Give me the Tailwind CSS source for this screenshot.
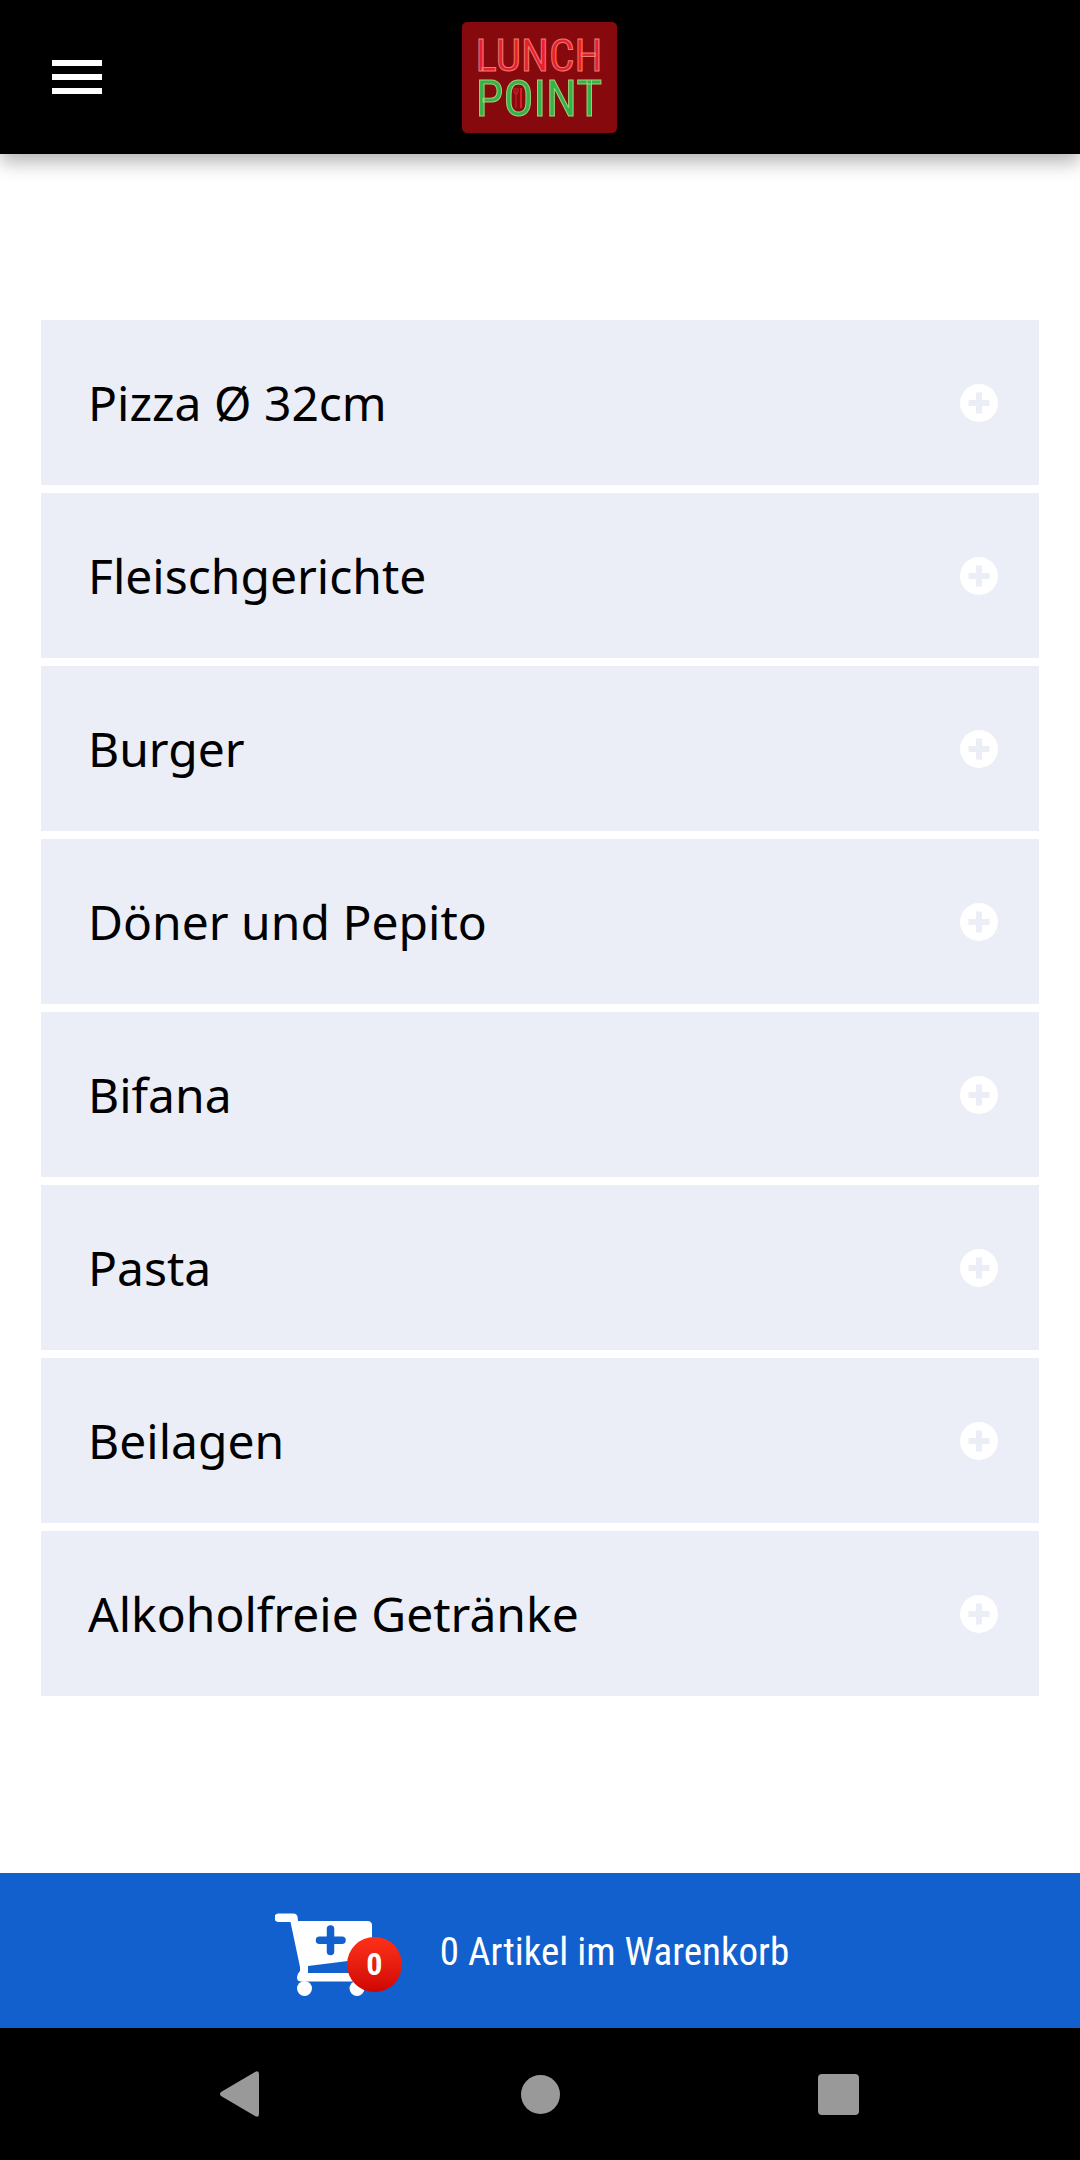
<!DOCTYPE html>
<html lang="de">

<head>
    <meta charset="UTF-8">
    <meta name="viewport" content="width=device-width, initial-scale=1.0">
    <title>Lunch Point</title>
    <script src="https://cdn.jsdelivr.net/npm/@tailwindcss/browser@4"></script>
</head>

<body class="bg-white min-h-screen flex flex-col font-['Noto_Sans',sans-serif] text-black">

    <header class="relative z-10 grid grid-cols-3 items-center h-[154px] px-[52px] bg-black shadow-[0_8px_18px_rgba(0,0,0,0.3)]">
        <button type="button" aria-label="Menü" class="flex flex-col gap-2 w-[50px] cursor-pointer">
            <span class="h-[6px] w-full bg-white"></span>
            <span class="h-[6px] w-full bg-white"></span>
            <span class="h-[6px] w-full bg-white"></span>
        </button>
        <a href="#" class="justify-self-center">
            <svg width="155" height="111" viewBox="0 0 155 111" class="block rounded-[5px] bg-[#860a0d] font-['Roboto_Condensed','Lato',sans-serif]">
                <g text-anchor="middle" stroke-width="1">
                    <text x="77" y="49" font-size="45" fill="#e8202e" stroke="#f07a72">LUNCH</text>
                    <text x="77" y="94" font-size="50" fill="#35b24a" stroke="#9fce78">POINT</text>
                </g>
                <!-- fork and knife -->
                <g stroke="#d81f28" fill="none">
                    <path d="M52 66v4q0 2 2 2t2-2v-4M54 66v20" stroke-width="1" />
                    <path d="M59 66v20" stroke-width="2" />
                </g>
            </svg>
        </a>
    </header>

    <main id="menu" class="flex-1 flex flex-col gap-2 px-[41px] pt-[166px] pb-10">
        <button type="button" class="category flex items-center justify-between h-[165px] pl-[47px] pr-[41px] bg-[#ebeef7] text-[48px] cursor-pointer">Pizza Ø 32cm</button>
        <button type="button" class="category flex items-center justify-between h-[165px] pl-[47px] pr-[41px] bg-[#ebeef7] text-[48px] cursor-pointer">Fleischgerichte</button>
        <button type="button" class="category flex items-center justify-between h-[165px] pl-[47px] pr-[41px] bg-[#ebeef7] text-[48px] cursor-pointer">Burger</button>
        <button type="button" class="category flex items-center justify-between h-[165px] pl-[47px] pr-[41px] bg-[#ebeef7] text-[48px] cursor-pointer">Döner und Pepito</button>
        <button type="button" class="category flex items-center justify-between h-[165px] pl-[47px] pr-[41px] bg-[#ebeef7] text-[48px] cursor-pointer">Bifana</button>
        <button type="button" class="category flex items-center justify-between h-[165px] pl-[47px] pr-[41px] bg-[#ebeef7] text-[48px] cursor-pointer">Pasta</button>
        <button type="button" class="category flex items-center justify-between h-[165px] pl-[47px] pr-[41px] bg-[#ebeef7] text-[48px] cursor-pointer">Beilagen</button>
        <button type="button" class="category flex items-center justify-between h-[165px] pl-[47px] pr-[41px] bg-[#ebeef7] text-[48px] cursor-pointer">Alkoholfreie Getränke</button>
    </main>

    <a href="#" class="flex items-center justify-center gap-[38px] h-[155px] pt-2 pr-4 bg-[#125fce] text-white font-['Roboto_Condensed',sans-serif]">
        <span class="relative w-[127px] h-[84px]">
            <svg width="127" height="84" viewBox="0 0 127 84" fill="#fff">
                <path d="M3.500 .5H18.500Q21.500 .5 22.500 3.500L23 8H92.500Q97 8 97 12.500V45L33 53L33 60H100V68.500H26Q22 68.500 22 64.500Q22 61 25 58V54L15.500 9H3.500A4.200 4.200 0 0 1 3.500 .5Z" />
                <circle cx="29.500" cy="75.500" r="7.500" />
                <circle cx="82" cy="75.500" r="7.500" />
                <path d="M55.500 16v22.500M44.500 27.200h22.500" stroke="#125fce" stroke-width="7.500" stroke-linecap="round" />
            </svg>
            <span class="absolute left-[72px] top-6 flex items-center justify-center size-[55px] rounded-full bg-linear-to-b from-[#ff3019] to-[#cf0404] text-[32px] leading-none font-bold">0</span>
        </span>
        <span class="text-[39px] pb-1">0 Artikel im Warenkorb</span>
    </a>

    <nav class="grid grid-cols-3 justify-items-center items-center h-[132px] px-[93px] bg-black">
        <button type="button" aria-label="Zurück" class="cursor-pointer">
            <svg width="44" height="46" viewBox="0 0 44 46" fill="#999">
                <path d="M1 21Q-1 23 1 25L35 45Q39 47 39 43V3Q39 -1 35 1Z" />
            </svg>
        </button>
        <button type="button" aria-label="Startseite" class="size-[39px] rounded-full bg-[#999] cursor-pointer"></button>
        <button type="button" aria-label="Übersicht" class="size-[41px] rounded-[4px] bg-[#999] cursor-pointer"></button>
    </nav>

    <template id="plus">
        <svg width="38" height="38" viewBox="0 0 38 38">
            <circle cx="19" cy="19" r="19" fill="#fff" />
            <path d="M19 8.500v21M8.500 19h21" stroke="#ebeef7" stroke-width="6" />
        </svg>
    </template>

    <script>
        let plus = document.getElementById("plus");
        document.querySelectorAll(".category").forEach(category => {
            category.appendChild(plus.content.cloneNode(true));
        });
    </script>
</body>

</html>
